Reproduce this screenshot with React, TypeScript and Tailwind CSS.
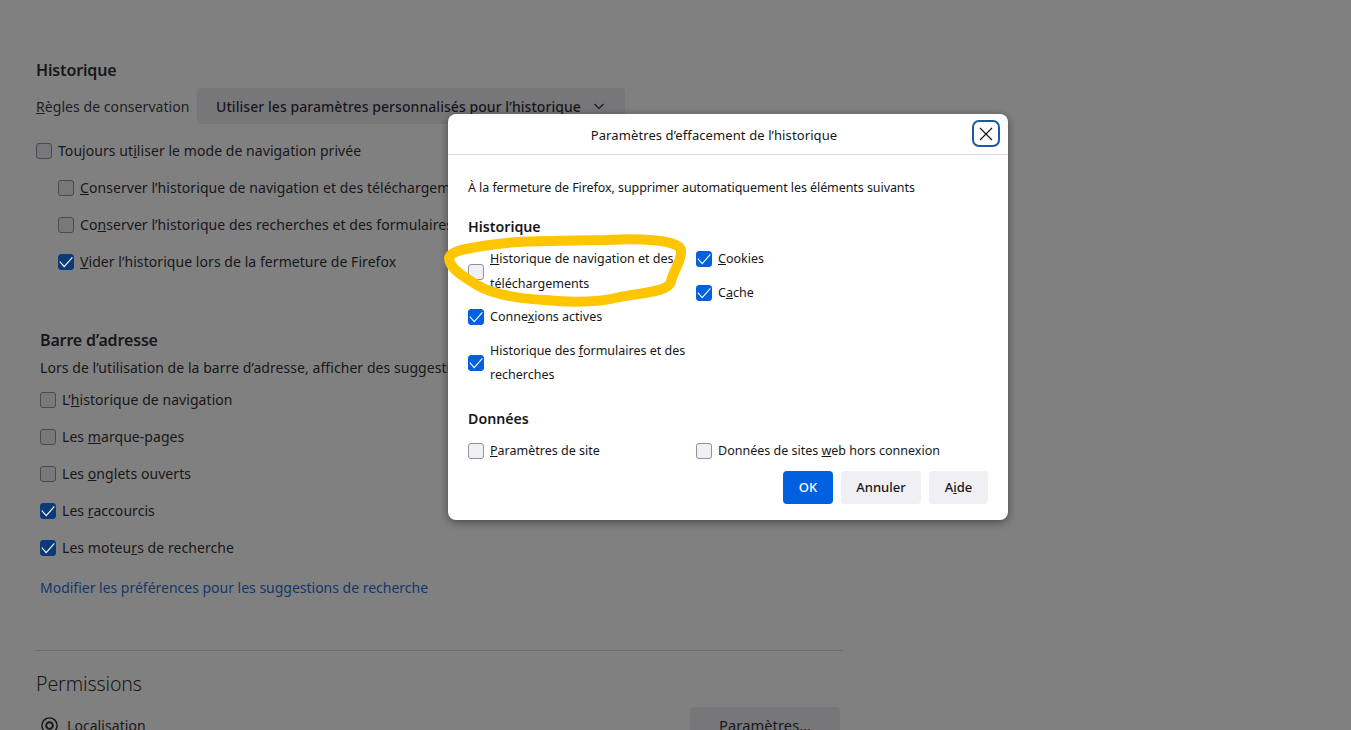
import React from "react";

const Box = ({ checked = false, dim = false }: { checked?: boolean; dim?: boolean }) => (
  <span
    className={`flex h-4 w-4 shrink-0 items-center justify-center rounded-[3px] border ${
      checked
        ? dim
          ? "border-[#0b3a78] bg-[#0b3a78]"
          : "border-[#0060df] bg-[#0060df]"
        : dim
          ? "border-[#4a4a50] bg-[#78787a]"
          : "border-[#8f8f9d] bg-[#f0f0f4]"
    }`}
  >
    {checked && (
      <svg viewBox="0 0 16 16" className="h-4 w-4 shrink-0" fill="none" stroke="white" strokeWidth="1.1">
        <path d="M1.8 7.6 6.2 12.6 14.4 3.4" />
      </svg>
    )}
  </span>
);

const BgRow = ({ checked, className = "", children }: { checked?: boolean; className?: string; children: React.ReactNode }) => (
  <div className={`flex h-[37px] items-center gap-[6px] whitespace-nowrap ${className}`}>
    <Box checked={checked} dim />
    <span>{children}</span>
  </div>
);

const DlgRow = ({ checked, className = "", children }: { checked?: boolean; className?: string; children: React.ReactNode }) => (
  <div className={`flex items-center gap-[6px] ${className}`}>
    <Box checked={checked} />
    <span className="leading-[24.5px]">{children}</span>
  </div>
);

export default function App() {
  return (
    <div className="relative h-[730px] w-[1351px] overflow-hidden bg-[#808080] font-['Noto_Sans',sans-serif] text-[14px] tracking-[0.06px] text-[#17171a]">
      <div className="w-[843px] pl-[36px] pt-[59px]">
        <h2 className="text-[16px] font-semibold leading-[22px] tracking-[-0.15px]">Historique</h2>
        <div className="mt-[7px] flex items-center gap-[8px]">
          <span className="w-[153px] whitespace-nowrap text-[#202024]"><u>R</u>ègles de conservation</span>
          <div className="flex h-[36px] w-[428px] items-center rounded-[4px] bg-[#77777a] pl-[19px] font-medium whitespace-nowrap">
            <span>Utiliser les paramètres personnalisés pour l’historique</span>
            <svg viewBox="0 0 12 12" className="ml-[12px] h-3 w-3" fill="none" stroke="#17171a" strokeWidth="1.2">
              <path d="M1.5 4 6 8.5 10.5 4" />
            </svg>
          </div>
        </div>
        <div className="mt-[8px]">
          <BgRow>Toujours ut<u>i</u>liser le mode de navigation privée</BgRow>
          <div className="pl-[22px]">
            <BgRow><u>C</u>onserver l’historique de navigation et des téléchargements</BgRow>
            <BgRow>Co<u>n</u>server l’historique des recherches et des formulaires</BgRow>
            <BgRow checked><u>V</u>ider l’historique lors de la fermeture de Firefox</BgRow>
          </div>
        </div>
        <div className="mt-[49px] pl-[4px]">
          <h2 className="text-[16px] font-semibold leading-[22px] tracking-[-0.15px]">Barre d’adresse</h2>
          <p className="mt-[7px] whitespace-nowrap leading-[20px]">Lors de l’utilisation de la barre d’adresse, afficher des suggestions pour</p>
          <div className="mt-[3px]">
            <BgRow>L’<u>h</u>istorique de navigation</BgRow>
            <BgRow>Les <u>m</u>arque-pages</BgRow>
            <BgRow>Les <u>o</u>nglets ouverts</BgRow>
            <BgRow checked>Les <u>r</u>accourcis</BgRow>
            <BgRow checked>Les moteu<u>r</u>s de recherche</BgRow>
          </div>
          <a className="mt-[12px] block leading-[20px] tracking-[-0.01px] text-[#12376b]">Modifier les préférences pour les suggestions de recherche</a>
        </div>
        <div className="mt-[52px] border-t border-[#6c6c6e] pt-[19px]">
          <h2 className="text-[19.5px] font-light leading-[28px] tracking-[-0.1px]">Permissions</h2>
          <div className="mt-[9px] flex items-start justify-between">
            <div className="mt-[8px] flex items-center gap-[8px]">
              <svg viewBox="0 0 20 20" className="ml-[4px] h-[19px] w-[19px]" fill="none" stroke="#17171a" strokeWidth="1.5">
                <circle cx="10" cy="10" r="8" />
                <circle cx="10" cy="10" r="3.5" strokeWidth="2" />
              </svg>
              <span>Localisation</span>
            </div>
            <div className="mr-[3px] flex h-[36px] w-[150px] items-center justify-center rounded-[4px] bg-[#77777a] text-[14.7px]">Paramètres…</div>
          </div>
        </div>
      </div>

      <div className="absolute left-[448px] top-[114px] h-[406px] w-[560px] rounded-[8px] bg-white text-[12.5px] tracking-[0px] text-[#17171a] shadow-[0_2px_8px_rgba(0,0,0,0.45)]">
        <div className="relative flex h-[41px] items-center justify-center border-b border-[#d8d8dc] pr-[28px] pt-[3px]">
          <span className="text-[13px] tracking-[0.1px]">Paramètres d’effacement de l’historique</span>
          <button className="absolute left-[524px] top-[6px] flex h-[27px] w-[28px] items-center justify-center rounded-[7px] border-2 border-[#1a5ba8]">
            <svg viewBox="0 0 14 14" className="h-[14px] w-[14px]" fill="none" stroke="#17171a" strokeWidth="1.2">
              <path d="M1 1 13 13M13 1 1 13" />
            </svg>
          </button>
        </div>
        <div className="px-[20px]">
          <p className="mt-[23px] leading-[20px] tracking-[-0.07px]">À la fermeture de Firefox, supprimer automatiquement les éléments suivants</p>
          <h3 className="mt-[18px] text-[14.2px] font-semibold leading-[22px]">Historique</h3>
          <div className="mt-[9px] grid grid-cols-[228px_1fr] leading-[24.5px]">
            <div>
              <DlgRow><u>H</u>istorique de navigation et des<br />téléchargements</DlgRow>
              <DlgRow checked className="mt-[9px]">Conne<u>x</u>ions actives</DlgRow>
              <DlgRow checked className="mt-[9px]">Historique des <u>f</u>ormulaires et des<br />recherches</DlgRow>
            </div>
            <div>
              <DlgRow checked>
                <u>C</u>ookies
              </DlgRow>
              <DlgRow checked className="mt-[9px]">C<u>a</u>che</DlgRow>
            </div>
          </div>
          <h3 className="mt-[20px] text-[14.2px] font-semibold leading-[22px]">Données</h3>
          <div className="mt-[9px] grid grid-cols-[228px_1fr]">
            <DlgRow><u>P</u>aramètres de site</DlgRow>
            <DlgRow>Données de sites <u>w</u>eb hors connexion</DlgRow>
          </div>
          <div className="mt-[8px] flex justify-end gap-[8px] text-[13px] font-medium">
            <button className="h-[33px] w-[50px] rounded-[4px] bg-[#0060df] text-white">OK</button>
            <button className="h-[33px] w-[80px] rounded-[4px] bg-[#f0f0f4]">Annuler</button>
            <button className="h-[33px] w-[59px] rounded-[4px] bg-[#f0f0f4]">A<u>i</u>de</button>
          </div>
        </div>
      </div>

      <svg className="pointer-events-none absolute left-0 top-0 h-[730px] w-[1351px]" viewBox="0 0 1351 730" fill="none">
        <path
          d="M449 258 C451 250 470 248 490 245 C515 241 540 241 607 240 C640 238 680 240 681 250 C682 262 672 272 671 282 C668 292 640 293 620 297 C600 302 575 303 545 300 C510 298 490 293 477 285 C465 277 450 270 449 258 Z"
          stroke="#fec600"
          strokeWidth="10"
          strokeLinejoin="round"
        />
      </svg>
    </div>
  );
}
